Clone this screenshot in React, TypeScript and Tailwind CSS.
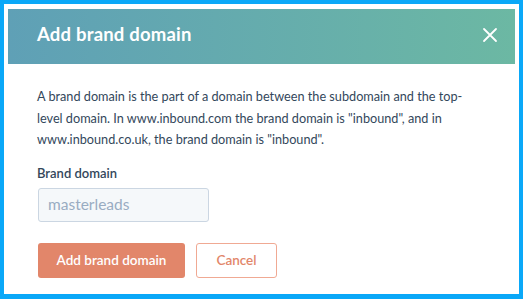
export default function App() {
  return (
    <div className="w-[523px] h-[299px] bg-[#0aa8f8] pt-[4px] pl-[4px]" style={{ fontFamily: 'Lato, "Open Sans", sans-serif' }}>
      <div className="w-[515px] h-[290px] bg-white pt-[5px] px-[4px]">
        <div className="h-[55px] flex items-center justify-between pl-[29px] pr-[17px] pb-[3px] bg-gradient-to-r from-[#5fa0b6] to-[#6cb8a3]">
          <h1 className="text-white text-[18.5px] font-bold tracking-[0.2px]">Add brand domain</h1>
          <svg width="16" height="16" viewBox="0 0 16 16" fill="none" stroke="white" strokeWidth="1.8" strokeLinecap="round">
            <path d="M2 2L14 14M14 2L2 14" />
          </svg>
        </div>
        <div className="pl-[29px] pr-[40px] pt-[22px]">
          <p className="text-[12.7px] leading-[21.5px] text-[#33475b] w-[440px]">
            A brand domain is the part of a domain between the subdomain and the top-level domain. In www.inbound.com the brand domain is "inbound", and in www.inbound.co.uk, the brand domain is "inbound".
          </p>
          <label className="block mt-[13px] text-[13px] font-semibold text-[#33475b]">Brand domain</label>
          <div className="mt-[5px] ml-[1px] w-[171px] h-[34px] rounded-[3px] border border-[#cbd6e2] bg-[#f5f8fa] flex items-center pl-[9px] text-[15.5px] text-[#99acc2]">
            masterleads
          </div>
          <div className="mt-[21px] ml-[1px] flex gap-[11px]">
            <button className="w-[147px] h-[35px] rounded-[3px] bg-[#e2866a] text-white text-[13.5px] font-semibold">Add brand domain</button>
            <button className="w-[81px] h-[35px] rounded-[3px] border border-[#f0a993] bg-white text-[#e2866a] text-[13.5px] font-semibold">Cancel</button>
          </div>
        </div>
      </div>
    </div>
  );
}
